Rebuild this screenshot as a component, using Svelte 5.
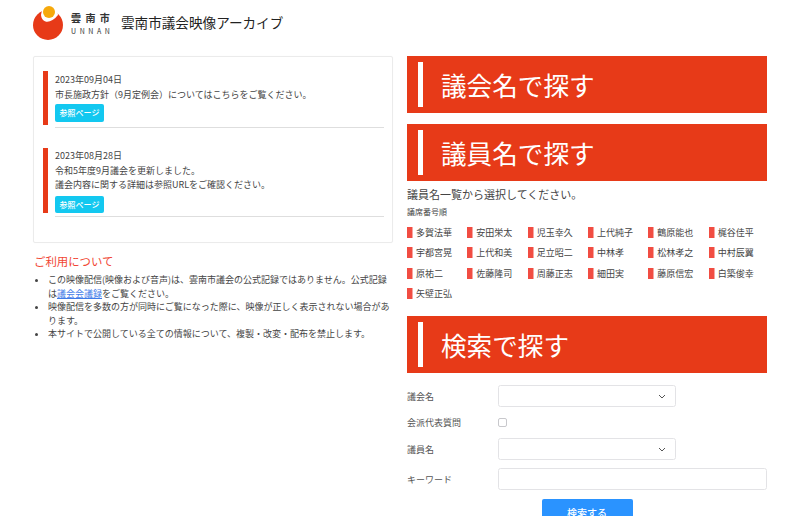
<script>
  const members = ['多賀法華','安田栄太','児玉幸久','上代純子','鶴原能也','梶谷佳平','宇都宮晃','上代和美','足立昭二','中林孝','松林孝之','中村辰翼','原祐二','佐藤隆司','周藤正志','細田実','藤原信宏','白築俊幸','矢壁正弘'];
</script>

<div class="page">
  <header class="top">
    <svg class="logo" width="46" height="36" viewBox="0 0 46 36" aria-hidden="true">
      <circle cx="15" cy="20" r="15" fill="#e73a18"/>
      <path d="M8 10 C9 19 18 19 25 10 L24 5 L9 5Z" fill="#fff"/>
      <circle cx="16" cy="7" r="6" fill="#f6a90b" />
    </svg>
    <div class="brand">
      <span class="brand-ja">雲南市</span>
      <span class="brand-en">UNNAN</span>
    </div>
    <h1>雲南市議会映像アーカイブ</h1>
  </header>

  <main class="cols">
    <section class="left">
      <div class="card">
        <article class="news">
          <div class="news-body">
            <p class="date">2023年09月04日</p>
            <p>市長施政方針（9月定例会）についてはこちらをご覧ください。</p>
            <span class="ref">参照ページ</span>
          </div>
        </article>
        <article class="news second">
          <div class="news-body">
            <p class="date">2023年08月28日</p>
            <p>令和5年度9月議会を更新しました。</p>
            <p>議会内容に関する詳細は参照URLをご確認ください。</p>
            <span class="ref">参照ページ</span>
          </div>
        </article>
      </div>

      <h2 class="notice">ご利用について</h2>
      <ul>
        <li>この映像配信(映像および音声)は、雲南市議会の公式記録ではありません。公式記録は<a href="#top">議会会議録</a>をご覧ください。</li>
        <li>映像配信を多数の方が同時にご覧になった際に、映像が正しく表示されない場合があります。</li>
        <li>本サイトで公開している全ての情報について、複製・改変・配布を禁止します。</li>
      </ul>
    </section>

    <section class="right">
      <h2 class="panel"><span>議会名で探す</span></h2>
      <h2 class="panel"><span>議員名で探す</span></h2>
      <p class="lead">議員名一覧から選択してください。</p>
      <p class="order">議席番号順</p>
      <div class="members">
        {#each members as m}
          <div class="member">{m}</div>
        {/each}
      </div>
      <h2 class="panel"><span>検索で探す</span></h2>
      <form class="search">
        <div class="row sel"><span class="lab">議会名</span><div class="select"><svg width="8" height="5" viewBox="0 0 8 5"><path d="M1 1l3 3 3-3" fill="none" stroke="#555" stroke-width="1"/></svg></div></div>
        <div class="row chk"><span class="lab">会派代表質問</span><span class="check"></span></div>
        <div class="row sel"><span class="lab">議員名</span><div class="select"><svg width="8" height="5" viewBox="0 0 8 5"><path d="M1 1l3 3 3-3" fill="none" stroke="#555" stroke-width="1"/></svg></div></div>
        <div class="row sel"><span class="lab">キーワード</span><div class="input"></div></div>
        <div class="submit"><span class="btn">検索する</span></div>
      </form>
    </section>
  </main>
</div>

<style>
  :global(body) { margin: 0; overflow: hidden; background: #fff; }
  .page {
    width: 800px; height: 516px; overflow: hidden; box-sizing: border-box;
    padding: 0 33px;
    font-family: "Noto Sans CJK JP", "Noto Sans", sans-serif;
    font-size: 9px; color: #363636;
  }
  p, h1, h2, ul { margin: 0; padding: 0; font-weight: 400; }
  .top { display: flex; align-items: flex-start; height: 56px; }
  .logo { margin-top: 5px; flex: none; }
  .brand { display: flex; flex-direction: column; margin: 13px 0 0 -8px; width: 42px; line-height: 1; }
  .brand-ja { font-size: 10px; font-weight: 700; letter-spacing: 4.4px; color: #333; height: 12px; white-space: nowrap; }
  .brand-en { font-size: 7px; letter-spacing: 3.6px; color: #333; margin-top: 3px; white-space: nowrap; }
  h1 { font-size: 13.6px; line-height: 20px; color: #222; margin: 12px 0 0 8px; font-weight: 400; }

  .cols { display: grid; grid-template-columns: 360px 360px; gap: 14px; }

  .card {
    height: 187px; box-sizing: border-box; border: 1px solid #ebebeb; border-radius: 2px;
    padding: 14px 8px 0 9px; box-shadow: 0 0 1px rgba(0,0,0,.05);
  }
  .news { border-left: 5px solid #e73a18; padding-left: 7px; height: 54px; }
  .news.second { height: 65px; margin-top: 23px; }
  .news-body { position: relative; height: 100%; }
  .news-body::after {
    content: ""; position: absolute; left: 0; right: 0; bottom: -3px; height: 1px; background: #dedede;
  }
  .news.second .news-body::after { bottom: -4px; }
  .news-body p { line-height: 13.8px; font-size: 9px; color: #444; }
  .news-body .date { line-height: 16px; padding-top: 1px; }
  .news.second .date { padding-top: 0; }
  .ref {
    display: block; width: 49px; height: 18px; line-height: 18px; margin-top: 2px;
    background: #13c8f0; color: #fff; border-radius: 2px; text-align: center; font-size: 8px; font-weight: 500;
  }
  .news.second .ref { margin-top: 4px; height: 17px; line-height: 17px; }

  .notice { color: #f14633; font-size: 11.4px; line-height: 16px; margin: 10px 0 0 1px; }
  ul { margin: 4px 0 0 15px; list-style: disc; line-height: 13.6px; color: #444; }
  a { color: #3f7be8; }

  .panel {
    height: 57px; box-sizing: border-box; background: #e73a18; color: #fff; padding: 6px 11px;
  }
  .panel span {
    display: block; height: 45px; border-left: 5px solid #fff; padding-left: 18px;
    font-size: 25.6px; line-height: 45px; font-weight: 400;
  }
  .panel + .panel { margin-top: 11px; }
  .lead { font-size: 11px; line-height: 16px; margin-top: 5px; color: #444; }
  .order { font-size: 8px; line-height: 12px; margin-top: 4px; color: #444; }
  .members {
    display: grid; grid-template-columns: repeat(6, 60.33px); grid-auto-rows: 20.4px; margin-top: 5px; height: 93px;
  }
  .member {
    font-size: 9px; line-height: 11px; padding-left: 9px; height: 11px; margin-top: 4px; color: #444;
    background: linear-gradient(#f14d42, #f14d42) left top / 5.5px 11px no-repeat;
  }

  .search { margin-top: 12px; }
  .row { display: flex; align-items: center; }
  .lab { width: 91px; flex: none; font-size: 9px; color: #555; }
  .row.sel { height: 22px; }
  .row.chk { height: 9px; margin: 11px 0; }
  .row.chk + .row.sel { margin-top: 11px; }
  .row.sel + .row.sel { margin-top: 8px; }
  .select, .input {
    box-sizing: border-box; height: 22px; border: 1px solid #e3e3e6; border-radius: 2.5px; background: #fff;
  }
  .select { width: 178px; display: flex; align-items: center; justify-content: flex-end; padding-right: 9px; }
  .input { width: 269px; }
  .check { width: 9px; height: 9px; box-sizing: border-box; border: 1px solid #c8c8cc; border-radius: 2px; }
  .submit { display: flex; justify-content: center; margin-top: 9px; }
  .btn {
    width: 91px; height: 30px; background: #2a93ff; color: #fff; border-radius: 2px;
    text-align: center; font-size: 10px; line-height: 28px; font-weight: 500;
  }
</style>
